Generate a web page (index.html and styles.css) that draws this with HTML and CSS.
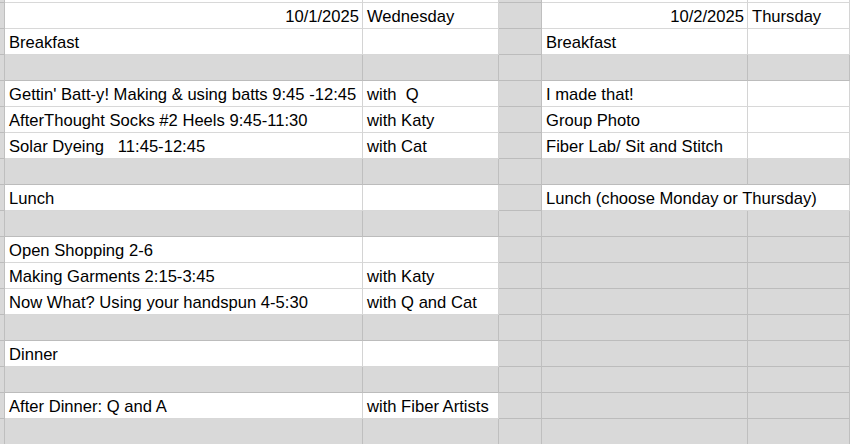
FILE: index.html
```html
<!DOCTYPE html>
<html>
<head>
<meta charset="utf-8">
<link rel="stylesheet" href="styles.css">
</head>
<body>
<div class="sheet">
  <div class="row top"><div class="c c0 g"></div><div class="c c1"></div><div class="c c2"></div><div class="c c3 g"></div><div class="c c4"></div><div class="c c5"></div></div>

  <div class="row"><div class="c c0 g"></div><div class="c c1 r">10/1/2025</div><div class="c c2">Wednesday</div><div class="c c3 g"></div><div class="c c4 r">10/2/2025</div><div class="c c5">Thursday</div></div>
  <div class="row"><div class="c c0 g"></div><div class="c c1">Breakfast</div><div class="c c2"></div><div class="c c3 g"></div><div class="c c4">Breakfast</div><div class="c c5"></div></div>
  <div class="row"><div class="c c0 g"></div><div class="c c1 g"></div><div class="c c2 g"></div><div class="c c3 g"></div><div class="c c4 g"></div><div class="c c5 g"></div></div>
  <div class="row"><div class="c c0 g"></div><div class="c c1">Gettin' Batt-y! Making &amp; using batts 9:45 -12:45</div><div class="c c2">with  Q</div><div class="c c3 g"></div><div class="c c4">I made that!</div><div class="c c5"></div></div>
  <div class="row"><div class="c c0 g"></div><div class="c c1">AfterThought Socks #2 Heels 9:45-11:30</div><div class="c c2">with Katy</div><div class="c c3 g"></div><div class="c c4">Group Photo</div><div class="c c5"></div></div>
  <div class="row"><div class="c c0 g"></div><div class="c c1">Solar Dyeing   11:45-12:45</div><div class="c c2">with Cat</div><div class="c c3 g"></div><div class="c c4">Fiber Lab/ Sit and Stitch</div><div class="c c5"></div></div>
  <div class="row"><div class="c c0 g"></div><div class="c c1 g"></div><div class="c c2 g"></div><div class="c c3 g"></div><div class="c c4 g"></div><div class="c c5 g"></div></div>
  <div class="row"><div class="c c0 g"></div><div class="c c1">Lunch</div><div class="c c2"></div><div class="c c3 g"></div><div class="c c45">Lunch (choose Monday or Thursday)</div></div>
  <div class="row"><div class="c c0 g"></div><div class="c c1 g"></div><div class="c c2 g"></div><div class="c c3 g"></div><div class="c c4 g"></div><div class="c c5 g"></div></div>
  <div class="row"><div class="c c0 g"></div><div class="c c1">Open Shopping 2-6</div><div class="c c2"></div><div class="c c3 g"></div><div class="c c4 g"></div><div class="c c5 g"></div></div>
  <div class="row"><div class="c c0 g"></div><div class="c c1">Making Garments 2:15-3:45</div><div class="c c2">with Katy</div><div class="c c3 g"></div><div class="c c4 g"></div><div class="c c5 g"></div></div>
  <div class="row"><div class="c c0 g"></div><div class="c c1">Now What? Using your handspun 4-5:30</div><div class="c c2">with Q and Cat</div><div class="c c3 g"></div><div class="c c4 g"></div><div class="c c5 g"></div></div>
  <div class="row"><div class="c c0 g"></div><div class="c c1 g"></div><div class="c c2 g"></div><div class="c c3 g"></div><div class="c c4 g"></div><div class="c c5 g"></div></div>
  <div class="row"><div class="c c0 g"></div><div class="c c1">Dinner</div><div class="c c2"></div><div class="c c3 g"></div><div class="c c4 g"></div><div class="c c5 g"></div></div>
  <div class="row"><div class="c c0 g"></div><div class="c c1 g"></div><div class="c c2 g"></div><div class="c c3 g"></div><div class="c c4 g"></div><div class="c c5 g"></div></div>
  <div class="row"><div class="c c0 g"></div><div class="c c1">After Dinner: Q and A</div><div class="c c2">with Fiber Artists</div><div class="c c3 g"></div><div class="c c4 g"></div><div class="c c5 g"></div></div>
  <div class="row"><div class="c c0 g"></div><div class="c c1 g"></div><div class="c c2 g"></div><div class="c c3 g"></div><div class="c c4 g"></div><div class="c c5 g"></div></div>
</div>
</body>
</html>
```

FILE: styles.css
```css
html, body {
  margin: 0;
  padding: 0;
  background: #ffffff;
  overflow: hidden;
}

.sheet {
  width: 850px;
  height: 444px;
  overflow: hidden;
  font-family: "Liberation Sans", Arial, sans-serif;
  font-size: 16.6px;
  color: #000000;
}

.row {
  display: flex;
  height: 26px;
}

.row.top {
  height: 3px;
}

.c {
  box-sizing: border-box;
  height: 100%;
  flex: none;
  background: #ffffff;
  border-right: 1px solid #d4d4d4;
  border-bottom: 1px solid #d8d8d8;
  padding: 2px 3px 0 4px;
  line-height: 24px;
  white-space: pre;
  overflow: hidden;
}

.c.g {
  background: #d9d9d9;
  border-right-color: #bfbfbf;
  border-bottom-color: #bcbcbc;
}

.c0 { width: 5px; padding: 0; }
.c1 { width: 358px; }
.c2 { width: 136px; }
.c3 { width: 43px; }
.c4 { width: 206px; }
.c5 { flex: 1 0 auto; }
.c45 { flex: 1 0 auto; }

.r { text-align: right; }
```
